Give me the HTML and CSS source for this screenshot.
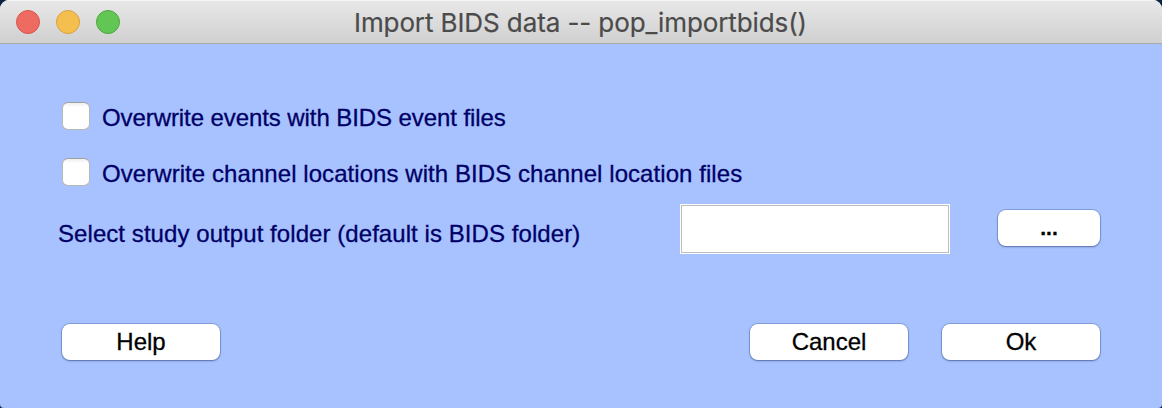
FILE: index.html
```html
<!DOCTYPE html>
<html lang="en">
<head>
<meta charset="utf-8">
<title>Import BIDS data -- pop_importbids()</title>
<link rel="stylesheet" href="styles.css">
</head>
<body>
<main class="window">
  <header class="titlebar">
    <div class="lights">
      <span class="light close"></span>
      <span class="light minimize"></span>
      <span class="light zoom"></span>
    </div>
    <h1 class="title">Import BIDS data -- pop_importbids()</h1>
  </header>
  <form class="content">
    <label class="option">
      <input class="checkbox" type="checkbox">
      <span class="label events">Overwrite events with BIDS event files</span>
    </label>
    <label class="option">
      <input class="checkbox" type="checkbox">
      <span class="label">Overwrite channel locations with BIDS channel location files</span>
    </label>
    <div class="folder-row">
      <label class="label folder-label" for="folder">Select study output folder (default is BIDS folder)</label>
      <input class="folder-input" id="folder" type="text">
      <button class="button browse" type="button">...</button>
    </div>
    <footer class="actions">
      <button class="button help" type="button">Help</button>
      <button class="button cancel" type="button">Cancel</button>
      <button class="button ok" type="button">Ok</button>
    </footer>
  </form>
</main>
</body>
</html>
```

FILE: styles.css
```css
* {
  box-sizing: border-box;
}

body {
  margin: 0;
  background: #0c2340;
  font-family: "Liberation Sans", Arial, sans-serif;
}

.window {
  display: flex;
  flex-direction: column;
  width: 1162px;
  height: 408px;
  overflow: hidden;
  border-radius: 9px 9px 4px 4px;
  background: #a8c2ff;
}

.titlebar {
  display: grid;
  grid-template-columns: 354px 1fr;
  align-items: center;
  height: 44px;
  border-bottom: 1px solid #aaaaa8;
  background: linear-gradient(#e8e8e8, #d0d0d0);
  box-shadow: inset 0 1px #f5f5f5;
}

.lights {
  display: flex;
  gap: 16px;
  padding-left: 16px;
}

.light {
  width: 24px;
  height: 24px;
  border: 1px solid;
  border-radius: 50%;
}

.close {
  border-color: #d9564c;
  background: #ed6b60;
}

.minimize {
  border-color: #d9a03f;
  background: #f5bf50;
}

.zoom {
  border-color: #4fa73f;
  background: #62c655;
}

.title {
  margin: 2px 0 0;
  color: #4b4b4b;
  font: 400 26px/30px Inter, "Liberation Sans", sans-serif;
  letter-spacing: -0.1px;
  -webkit-text-stroke: 0.2px;
  white-space: nowrap;
}

.content {
  display: flex;
  flex-direction: column;
  padding: 58px 62px 0 58px;
}

.option {
  display: flex;
  align-items: flex-start;
  gap: 12px;
  height: 56px;
  padding-left: 4px;
}

.checkbox {
  appearance: none;
  flex: none;
  width: 28px;
  height: 28px;
  margin: 0;
  border: 1px solid #b8b8b8;
  border-top-color: #a0a0a0;
  border-radius: 6px;
  background: linear-gradient(#eeeeee, #ffffff 4px);
}

.label {
  color: #000066;
  font-size: 24px;
  line-height: 28px;
  letter-spacing: 0.065px;
  -webkit-text-stroke: 0.3px;
  white-space: nowrap;
}

.events {
  letter-spacing: -0.08px;
}

.option .label {
  margin-top: 2px;
}

.folder-row {
  display: grid;
  grid-template-columns: 622px 318px 102px;
  align-items: center;
  height: 50px;
  margin-top: -10px;
}

.folder-label {
  padding-top: 10px;
}

.folder-input {
  width: 270px;
  height: 50px;
  margin: 0;
  padding: 0 6px;
  border: 1px solid #ffffff;
  outline: 1px solid #bdbdbd;
  outline-offset: -2px;
  background: #ffffff;
  font: 24px "Liberation Sans", sans-serif;
}

.button {
  height: 36px;
  margin: 0;
  padding: 0;
  border: 0;
  border-radius: 8px;
  background: #ffffff;
  box-shadow: 0 0 0 1px rgba(70, 95, 155, 0.35), 0 1px 2px rgba(40, 55, 100, 0.5);
  color: #000000;
  font: 24px/36px "Liberation Sans", Arial, sans-serif;
  -webkit-text-stroke: 0.3px;
}

.browse {
  width: 102px;
  margin-bottom: 2px;
  font-size: 21px;
  font-weight: 700;
}

.actions {
  display: flex;
  margin-top: 70px;
  padding-left: 4px;
}

.help,
.cancel,
.ok {
  width: 158px;
}

.cancel {
  margin-left: auto;
}

.ok {
  margin-left: 34px;
}
```
